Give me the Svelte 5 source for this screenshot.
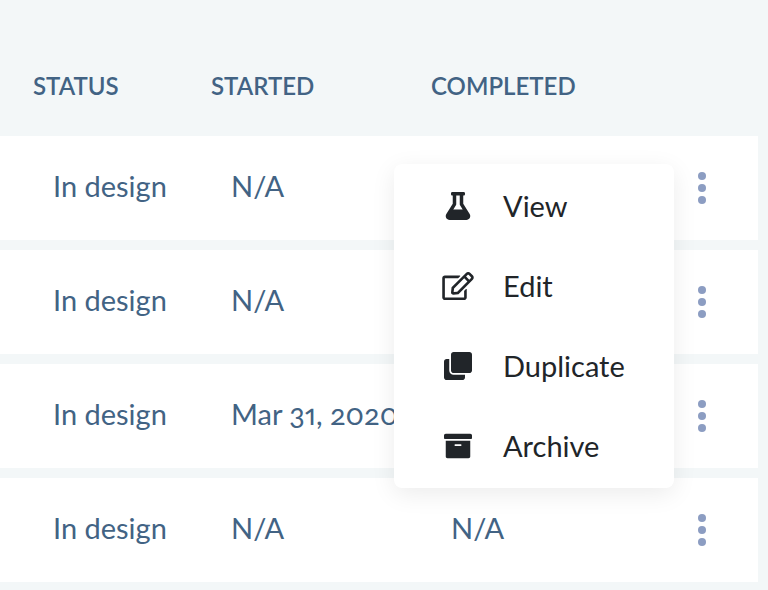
<script>
  const rows = [
    { status: 'In design', started: 'N/A', completed: '' },
    { status: 'In design', started: 'N/A', completed: '' },
    { status: 'In design', started: 'Mar 31, 2020', completed: '' },
    { status: 'In design', started: 'N/A', completed: 'N/A' }
  ];

  const actions = [
    {
      label: 'View',
      box: '0 0 448 512',
      path: 'M437.2 403.5L320 215V64h8c13.3 0 24-10.7 24-24V24c0-13.3-10.7-24-24-24H120c-13.3 0-24 10.7-24 24v16c0 13.3 10.7 24 24 24h8v151L10.8 403.5C-18.5 450.6 15.3 512 70.9 512h306.2c55.7 0 89.4-61.5 60.1-108.5zM137.9 320l48.2-77.6c3.7-5.2 5.8-11.6 5.8-18.4V64h64v160c0 6.9 2.2 13.2 5.8 18.4l48.2 77.6h-172z'
    },
    {
      label: 'Edit',
      box: '0 0 576 512',
      path: 'M402.3 344.9l32-32c5-5 13.7-1.5 13.7 5.7V464c0 26.5-21.5 48-48 48H48c-26.5 0-48-21.5-48-48V112c0-26.5 21.5-48 48-48h273.5c7.1 0 10.7 8.6 5.7 13.7l-32 32c-1.5 1.5-3.5 2.3-5.7 2.3H48v352h352V350.5c0-2.1.8-4.1 2.3-5.6zm156.6-201.8L296.3 405.7l-90.4 10c-26.2 2.9-48.5-19.2-45.6-45.6l10-90.4L432.9 17.1c22.9-22.9 59.9-22.9 82.7 0l43.2 43.2c22.9 22.9 22.9 60 .1 82.8zM460.1 174L402 115.9 216.2 301.8l-7.3 65.3 65.3-7.3L460.1 174zm64.8-79.7l-43.2-43.2c-4.1-4.1-10.8-4.1-14.8 0L436 82l58.1 58.1 30.9-30.9c4-4.2 4-10.8-.1-14.9z'
    },
    {
      label: 'Duplicate',
      box: '0 0 512 512',
      path: 'M464 0c26.51 0 48 21.49 48 48v288c0 26.51-21.49 48-48 48H176c-26.51 0-48-21.49-48-48V48c0-26.51 21.49-48 48-48h288M176 416c-44.112 0-80-35.888-80-80V128H48c-26.51 0-48 21.49-48 48v288c0 26.51 21.49 48 48 48h288c26.51 0 48-21.49 48-48v-48H176z'
    },
    {
      label: 'Archive',
      box: '0 0 512 512',
      path: 'M32 448c0 17.7 14.3 32 32 32h384c17.7 0 32-14.3 32-32V160H32v288zm160-212c0-6.6 5.4-12 12-12h104c6.6 0 12 5.4 12 12v8c0 6.6-5.4 12-12 12H204c-6.6 0-12-5.4-12-12v-8zM480 32H32C14.3 32 0 46.3 0 64v48c0 8.8 7.2 16 16 16h480c8.8 0 16-7.2 16-16V64c0-17.7-14.3-32-32-32z'
    }
  ];

  let open = $state(0);
</script>

<main>
  <table>
    <thead>
      <tr>
        <th class="status" scope="col">STATUS</th>
        <th class="started" scope="col">STARTED</th>
        <th scope="col">COMPLETED</th>
        <td class="more"></td>
      </tr>
    </thead>
    <tbody>
      {#each rows as row, i}
        <tr>
          <td>{row.status}</td>
          <td>{row.started}</td>
          <td>{row.completed}</td>
          <td class="more">
            <button
              class="dots"
              aria-label="Row actions"
              aria-expanded={open === i}
              onclick={() => (open = open === i ? -1 : i)}
            >
              <svg width="8" height="32" viewBox="0 0 8 32" aria-hidden="true">
                <circle cx="4" cy="4" r="4" />
                <circle cx="4" cy="16" r="4" />
                <circle cx="4" cy="28" r="4" />
              </svg>
            </button>
            {#if open === i}
              <div class="menu" role="menu">
                {#each actions as action}
                  <button class="item" role="menuitem">
                    <svg viewBox={action.box} aria-hidden="true"><path d={action.path} /></svg>
                    <span>{action.label}</span>
                  </button>
                {/each}
              </div>
            {/if}
          </td>
        </tr>
      {/each}
    </tbody>
  </table>
</main>

<style>
  :global(body) {
    margin: 0;
    background: #f3f7f8;
  }

  main {
    padding: 26px 10px 0 0;
    font-family: Lato, 'Open Sans', sans-serif;
    font-size: 29px;
    font-variant-numeric: oldstyle-nums proportional-nums;
    line-height: 40px;
    color: #426384;
  }

  table {
    width: 100%;
    table-layout: fixed;
    border-collapse: separate;
    border-spacing: 0 10px;
  }

  th {
    height: 90px;
    padding: 10px 0 0 33px;
    box-sizing: border-box;
    font-size: 24px;
    font-weight: 600;
    text-align: left;
    vertical-align: middle;
  }

  .status {
    width: 178px;
  }

  .started {
    width: 220px;
  }

  .more {
    position: relative;
    width: 112px;
    padding: 0;
    text-align: center;
  }

  tbody td {
    height: 104px;
    box-sizing: border-box;
    padding: 0 0 4px 53px;
    background: #fff;
    white-space: nowrap;
  }

  tbody .more {
    padding: 0;
  }

  button {
    border: 0;
    padding: 0;
    background: none;
    font: inherit;
    cursor: pointer;
  }

  .dots {
    display: block;
    margin: 0 auto;
    padding: 8px 16px;
  }

  .dots svg {
    display: block;
    fill: #8c9dc2;
  }

  .menu {
    position: absolute;
    z-index: 1;
    top: 28px;
    right: 84px;
    width: 280px;
    padding: 2px 0;
    box-sizing: border-box;
    border-radius: 8px;
    background: #fff;
    box-shadow: 0 6px 24px rgba(0, 0, 0, 0.08);
  }

  .item {
    display: flex;
    align-items: center;
    gap: 29px;
    width: 100%;
    height: 80px;
    padding: 0 48px;
    color: #212529;
    text-align: left;
  }

  .item svg {
    flex: none;
    width: 32px;
    height: 28px;
    fill: currentColor;
  }
</style>
